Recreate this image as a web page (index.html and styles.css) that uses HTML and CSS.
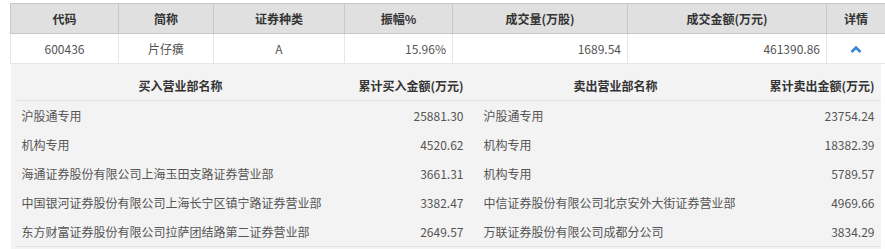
FILE: index.html
```html
<!DOCTYPE html>
<html lang="zh-CN">
<head>
<meta charset="utf-8">
<title>龙虎榜</title>
<link rel="stylesheet" href="styles.css">
</head>
<body>
<div class="wrap">
  <table class="main">
    <colgroup>
      <col class="c1"><col class="c2"><col class="c3"><col class="c4"><col class="c5"><col class="c6"><col class="c7">
    </colgroup>
    <thead>
      <tr>
        <th>代码</th><th>简称</th><th>证券种类</th><th>振幅%</th><th>成交量(万股)</th><th>成交金额(万元)</th><th>详情</th>
      </tr>
    </thead>
    <tbody>
      <tr class="row">
        <td class="ctr">600436</td>
        <td class="ctr">片仔癀</td>
        <td class="ctr">A</td>
        <td class="num">15.96%</td>
        <td class="num">1689.54</td>
        <td class="num">461390.86</td>
        <td class="ctr"><svg class="chev" width="12" height="8" viewBox="0 0 12 8"><polyline points="1.5,7 6,2.6 10.5,7" fill="none" stroke="#3b87d6" stroke-width="2.8" stroke-linejoin="miter"/></svg></td>
      </tr>
      <tr class="detail">
        <td colspan="7" class="panel">
          <div class="panel-box">
            <table class="inner">
              <colgroup>
                <col class="d1"><col class="d2"><col class="d3"><col class="d4">
              </colgroup>
              <thead>
                <tr>
                  <th class="ihc">买入营业部名称</th>
                  <th class="ihr buy">累计买入金额(万元)</th>
                  <th class="ihc">卖出营业部名称</th>
                  <th class="ihr">累计卖出金额(万元)</th>
                </tr>
              </thead>
              <tbody>
                <tr><td class="nm">沪股通专用</td><td class="amt buy">25881.30</td><td class="nm sell">沪股通专用</td><td class="amt">23754.24</td></tr>
                <tr><td class="nm">机构专用</td><td class="amt buy">4520.62</td><td class="nm sell">机构专用</td><td class="amt">18382.39</td></tr>
                <tr><td class="nm">海通证券股份有限公司上海玉田支路证券营业部</td><td class="amt buy">3661.31</td><td class="nm sell">机构专用</td><td class="amt">5789.57</td></tr>
                <tr><td class="nm">中国银河证券股份有限公司上海长宁区镇宁路证券营业部</td><td class="amt buy">3382.47</td><td class="nm sell">中信证券股份有限公司北京安外大街证券营业部</td><td class="amt">4969.66</td></tr>
                <tr><td class="nm">东方财富证券股份有限公司拉萨团结路第二证券营业部</td><td class="amt buy">2649.57</td><td class="nm sell">万联证券股份有限公司成都分公司</td><td class="amt">3834.29</td></tr>
              </tbody>
            </table>
          </div>
        </td>
      </tr>
    </tbody>
  </table>
</div>
</body>
</html>
```

FILE: styles.css
```css
html, body {
  margin: 0;
  padding: 0;
  background: #fff;
  overflow: hidden;
}
body {
  font-family: "Noto Sans CJK SC", "Noto Sans", sans-serif;
  font-size: 12px;
  color: #555;
}
.wrap {
  padding: 3px 0 0 10px;
  width: 875px;
}
table {
  border-collapse: collapse;
  table-layout: fixed;
}
.main {
  width: 875px;
}
.c1 { width: 108px; }
.c2 { width: 95px; }
.c3 { width: 131px; }
.c4 { width: 108px; }
.c5 { width: 175px; }
.c6 { width: 199px; }
.c7 { width: 59px; }

.main > thead th {
  height: 29px;
  padding: 0;
  background: #e0e0e0;
  border: 1px solid #c8c8c8;
  color: #333;
  font-weight: bold;
  text-align: center;
  line-height: 29px;
}
.row td {
  height: 29px;
  padding: 0;
  border: 1px solid #e6e6e6;
  background: #fff;
  line-height: 29px;
  white-space: nowrap;
}
.ctr { text-align: center; }
.num { text-align: right; padding-right: 6px !important; }
.chev { display: inline-block; vertical-align: middle; margin-top: -3px; }

.panel {
  padding: 0;
  border: none;
}
.panel-box {
  margin-right: 5px;
  padding: 7px 0 10px 6px;
  background: #f3f3f3;
}
.inner {
  width: 864px;
}
.d1 { width: 328px; }
.d2 { width: 132px; }
.d3 { width: 278px; }
.d4 { width: 126px; }

.inner th {
  height: 29px;
  padding: 0;
  border-bottom: 1px solid #e2e2e2;
  color: #333;
  font-weight: bold;
  line-height: 29px;
  white-space: nowrap;
}
.ihc { text-align: center; }
.ihr { text-align: right; padding-right: 6px !important; }
.inner td {
  height: 29px;
  padding: 0;
  line-height: 29px;
  white-space: nowrap;
  color: #555;
}
.inner tbody tr:last-child td {
  border-bottom: 1px solid #e2e2e2;
}
.nm { padding-left: 5px !important; }
.nm.sell { padding-left: 7px !important; }
.amt { text-align: right; padding-right: 6px !important; }
.inner .buy { padding-right: 13px !important; }
```
